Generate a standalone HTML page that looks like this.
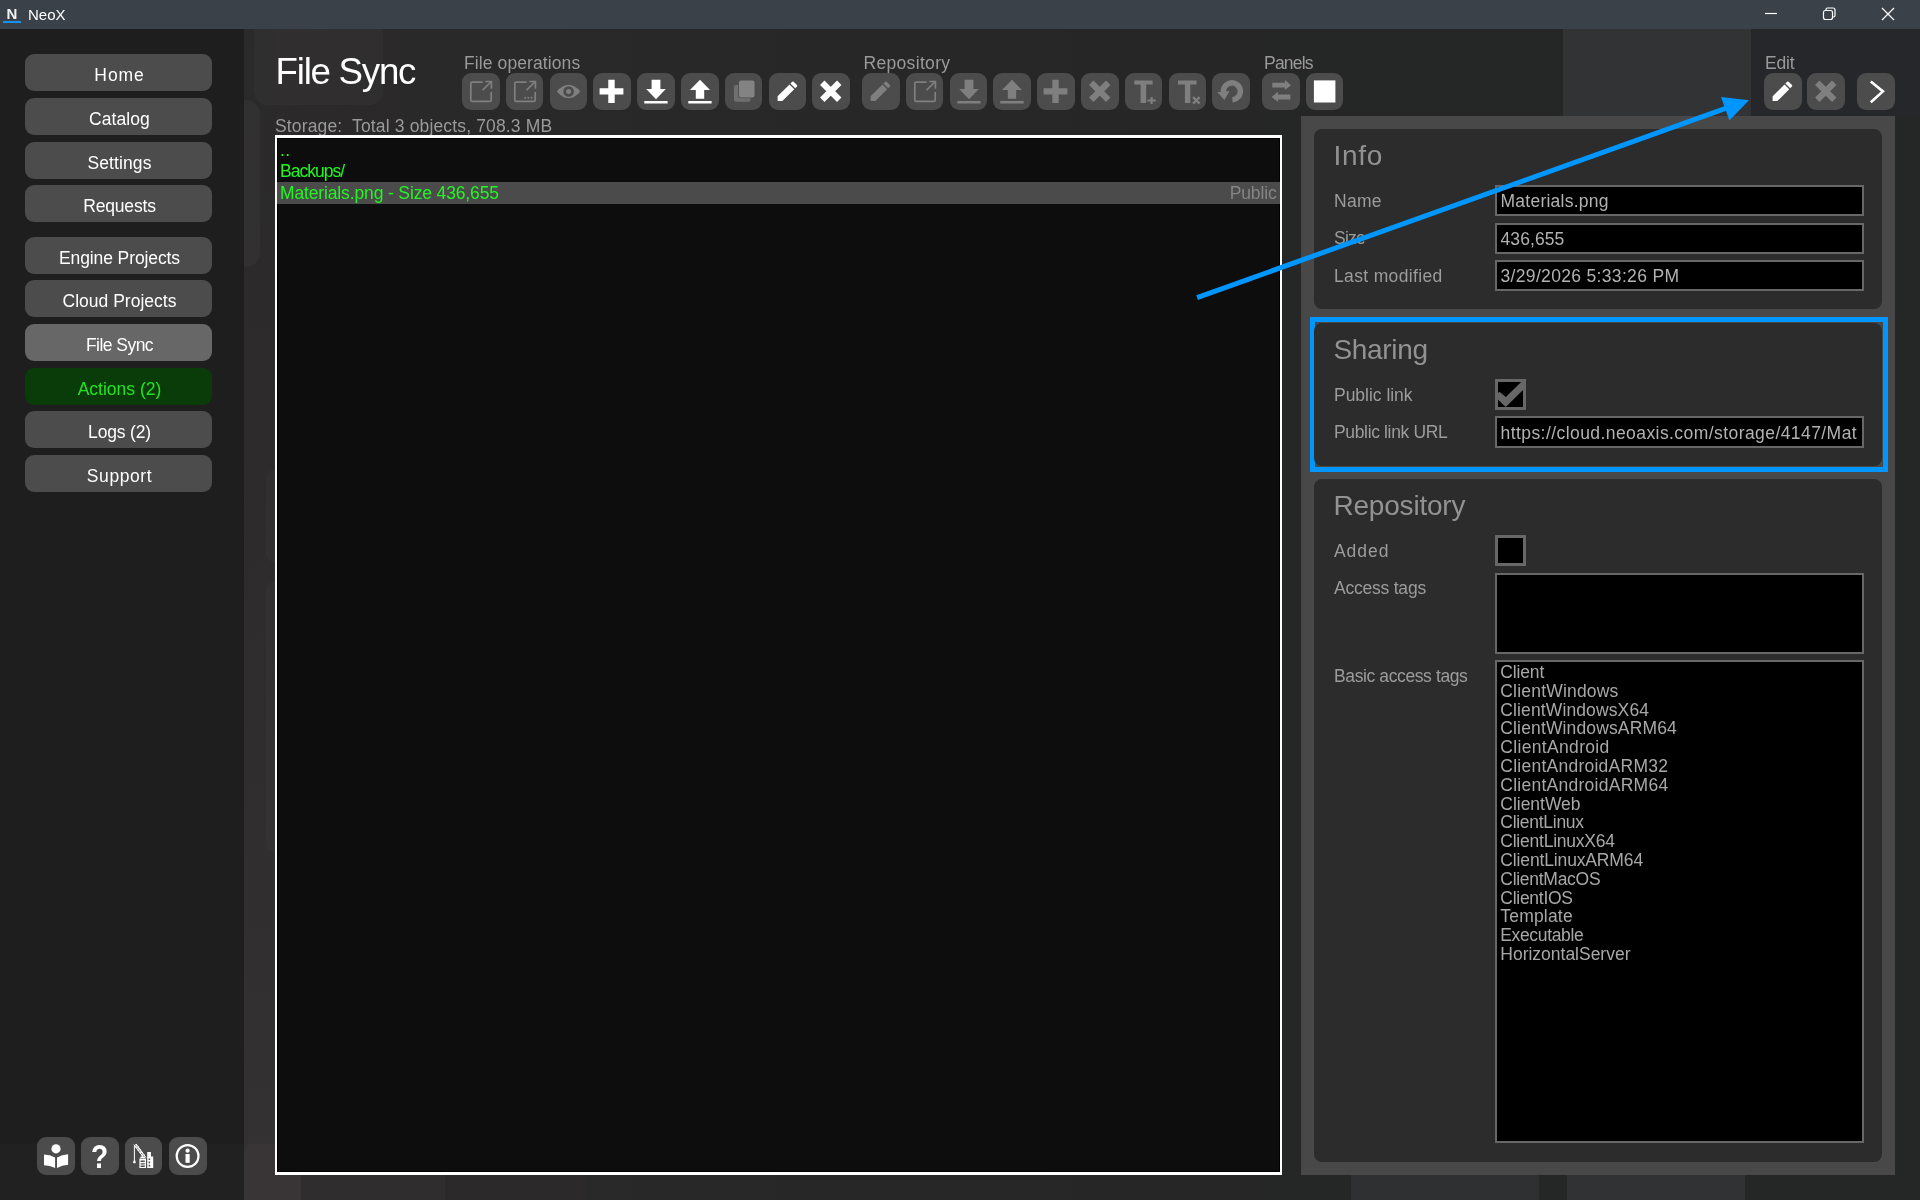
<!DOCTYPE html>
<html lang="en">
<head>
<meta charset="utf-8">
<title>NeoX</title>
<style>
*{box-sizing:border-box;margin:0;padding:0}
html,body{width:1920px;height:1200px;overflow:hidden;background:#272727;font-family:"Liberation Sans",sans-serif;}
body{position:relative;color:#fff}
.abs{position:absolute}
#wrap{position:absolute;left:0;top:0;width:1920px;height:1200px;will-change:transform}
/* title bar */
#titlebar{left:0;top:0;width:1920px;height:29px;background:#3a4149}
#titlebar .logo{left:6.5px;top:4.5px;font-size:15px;font-weight:bold;color:#f2f2f2;line-height:18px}
#titlebar .logoline{left:3px;top:21px;width:18px;height:2px;background:#1492ee}
#titlebar .ttl{left:28px;top:6px;font-size:15px;line-height:18px;color:#fff}
/* sidebar */
#sidebar{left:0;top:29px;width:244px;height:1171px;background:#1e1e1e}
.nav{position:absolute;left:25px;width:187px;height:37px;border-radius:9px;background:#4c4c4c;color:#fff;font-size:17.5px;letter-spacing:-.1px;line-height:37px;text-align:center;padding-top:3px;padding-left:2px}
.nav.sel{background:#676767}
.nav.act{background:#0a3c0a;color:#22e322}
/* main bg */
#mainbg{left:244px;top:29px;width:1676px;height:1171px;background:linear-gradient(90deg,#2c2a2b 0,#2a292a 200px,#262626 900px,#252626 100%)}
.bgr{position:absolute;border-radius:14px}
/* text */
.h1{left:275.6px;top:50px;font-size:36.7px;line-height:44px;color:#fff;white-space:nowrap}
.grp{position:absolute;top:53px;font-size:17.5px;letter-spacing:.25px;line-height:20px;color:#9a9a9a;white-space:nowrap}
.tb{position:absolute;top:73px;width:37.5px;height:37px;border-radius:9px;background:#4c4c4c}
.tb svg{position:absolute;left:0;top:0;width:38px;height:37px;overflow:visible}
.tb.dis svg{fill:#7f7f7f;stroke:#7f7f7f}
.tb.en svg{fill:#fff;stroke:#fff}
.storage{left:275px;top:116px;font-size:17.5px;letter-spacing:.3px;line-height:20px;color:#9a9a9a;white-space:pre}
/* list */
#list{left:275px;top:135px;width:1007px;height:1040px;border:solid #fff;border-width:3px 2px;background:#0d0d0d;box-shadow:inset 0 0 0 1px #000}
.row{position:absolute;left:0;width:1003px;height:22px;font-size:17.5px;letter-spacing:.3px;line-height:22px;color:#22f622;padding-left:3px;white-space:nowrap}
.row.sel{background:#4b4b4b}
.row .pub{position:absolute;right:3.5px;top:0;color:#858585;letter-spacing:-.15px}
/* right panel */
#rp{left:1301px;top:116px;width:594px;height:1059px;background:#484848}
.pn{position:absolute;left:1314px;width:568px;border-radius:8px;background:#2c2c2c}
.pt{position:absolute;left:1333.5px;font-size:28px;line-height:34px;color:#929292;white-space:nowrap}
.lb{position:absolute;left:1334px;font-size:17.5px;letter-spacing:.3px;line-height:20px;color:#9c9c9c;white-space:nowrap}
.fd{position:absolute;left:1495px;width:369px;height:31px;border:2px solid #676767;background:#000;color:#b2b2b2;font-size:17.5px;letter-spacing:.25px;line-height:29px;padding-left:3.5px;white-space:nowrap;overflow:hidden}
.cb{position:absolute;left:1495px;width:31px;height:31px;border:3px solid #676767;background:#000}
.tags{position:absolute;left:1500.3px;font-size:17.5px;line-height:18.8px;color:#a8a8a8;white-space:nowrap}
.tg{height:18.8px;letter-spacing:.2px}
.ib{position:absolute;top:1137px;width:37.5px;height:37.5px;border-radius:9px;background:#4c4c4c}
.ib svg{position:absolute;left:0;top:0;width:37px;height:37px;fill:#fff;stroke:#fff}
</style>
</head>
<body>
<div id="wrap">
<div id="mainbg" class="abs">
<div class="bgr" style="left:0;top:0;width:31px;height:1171px;border-radius:0;background:linear-gradient(180deg,#2b2a2b 0,#2d2b2c 40%,#322f30 80%,#353233 100%)"></div>
<div class="bgr" style="left:10px;top:-14px;width:129px;height:90px;background:rgba(255,255,255,.028)"></div>
<div class="bgr" style="left:-14px;top:71px;width:30px;height:167px;background:rgba(255,255,255,.03)"></div>
<div class="bgr" style="left:22px;top:441px;width:20px;height:92px;background:rgba(255,255,255,.02);border-radius:8px"></div>
<div class="bgr" style="left:22px;top:553px;width:20px;height:270px;background:rgba(255,255,255,.02);border-radius:8px"></div>
<div class="bgr" style="left:1319px;top:0;width:188px;height:87px;background:#323334;border-radius:0"></div>
<div class="bgr" style="left:1507px;top:0;width:169px;height:87px;background:#26272a;border-radius:0"></div>
<div class="bgr" style="left:0;top:1115px;width:57px;height:56px;background:#393536;border-radius:8px 8px 0 0"></div>
<div class="bgr" style="left:57px;top:1146px;width:144px;height:25px;background:#2f2d2e;border-radius:0"></div>
<div class="bgr" style="left:201px;top:1146px;width:140px;height:25px;background:#2b292a;border-radius:0"></div>
<div class="bgr" style="left:1107px;top:1146px;width:188px;height:25px;background:#2e3032;border-radius:0"></div>
<div class="bgr" style="left:1323px;top:1146px;width:178px;height:25px;background:#303234;border-radius:0"></div>
</div>
<div id="sidebar" class="abs"><div class="abs" style="left:0;top:1115px;width:244px;height:56px;background:rgba(255,255,255,.014)"></div></div>
<div id="titlebar" class="abs">
  <div class="abs logo">N</div><div class="abs logoline"></div>
  <div class="abs ttl">NeoX</div>
</div>
<div class="nav" style="top:54px;letter-spacing:0.90px">Home</div>
<div class="nav" style="top:98px;letter-spacing:0.07px">Catalog</div>
<div class="nav" style="top:141.5px;letter-spacing:0.11px">Settings</div>
<div class="nav" style="top:185px;letter-spacing:-0.17px">Requests</div>
<div class="nav" style="top:236.5px;letter-spacing:-0.10px">Engine Projects</div>
<div class="nav" style="top:280px;letter-spacing:0.01px">Cloud Projects</div>
<div class="nav sel" style="top:324px;letter-spacing:-0.54px">File Sync</div>
<div class="nav act" style="top:368px;letter-spacing:0.00px">Actions (2)</div>
<div class="nav" style="top:411px;letter-spacing:-0.17px">Logs (2)</div>
<div class="nav" style="top:455px;letter-spacing:0.57px">Support</div>

<div class="abs h1" style="letter-spacing:-1.26px">File Sync</div>
<div class="grp" style="left:464px;letter-spacing:0.10px">File operations</div>
<div class="grp" style="left:863.5px;letter-spacing:0.32px">Repository</div>
<div class="grp" style="left:1264px;letter-spacing:-0.79px">Panels</div>
<div class="grp" style="left:1765px;letter-spacing:-0.15px">Edit</div>
<div class="abs storage" style="letter-spacing:0.15px">Storage:  Total 3 objects, 708.3 MB</div>
<!--TB0-->
<div class="tb dis" style="left:462.00px"><svg viewBox="0 0 38 37"><path d="M20.6 9.2 H10.2 Q8.8 9.2 8.8 10.6 V27 Q8.8 28.4 10.2 28.4 H27.8 Q29.2 28.4 29.2 27 V19" fill="none" stroke-width="1.7"/><path d="M20.6 17.2 L28.8 9 M23.4 8.5 H29.4 V15.8" fill="none" stroke-width="1.7"/></svg></div>
<div class="tb dis" style="left:505.81px"><svg viewBox="0 0 38 37"><path d="M20.6 9.2 H10.2 Q8.8 9.2 8.8 10.6 V27 Q8.8 28.4 10.2 28.4 H27.8 Q29.2 28.4 29.2 27 V19" fill="none" stroke-width="1.7"/><path d="M20.6 17.2 L28.8 9 M23.4 8.5 H29.4 V15.8" fill="none" stroke-width="1.7"/><circle cx="19.2" cy="24.8" r="1.05" stroke="none"/><circle cx="22.4" cy="24.8" r="1.05" stroke="none"/><circle cx="25.6" cy="24.8" r="1.05" stroke="none"/></svg></div>
<div class="tb dis" style="left:549.62px"><svg viewBox="0 0 38 37"><path fill-rule="evenodd" stroke="none" d="M6.8 18.5 Q12.5 11.8 18.6 11.8 Q24.7 11.8 30.4 18.5 Q24.7 25.2 18.6 25.2 Q12.5 25.2 6.8 18.5 Z M18.6 13.2 A5.3 5.3 0 1 0 18.6 23.8 A5.3 5.3 0 1 0 18.6 13.2 Z"/><circle cx="18.6" cy="18.5" r="2.5" stroke="none"/></svg></div>
<div class="tb en" style="left:593.43px"><svg viewBox="0 0 38 37"><path stroke="none" d="M15.3 6.8 H21.7 V15.2 H30.4 V21.4 H21.7 V29.9 H15.3 V21.4 H6.6 V15.2 H15.3 Z"/></svg></div>
<div class="tb en" style="left:637.24px"><svg viewBox="0 0 38 37"><path stroke="none" d="M14.6 6.8 H23.4 V16 H28.8 L19 26.2 L9.2 16 H14.6 Z M7.3 28 H30.6 V30.4 H7.3 Z"/></svg></div>
<div class="tb en" style="left:681.05px"><svg viewBox="0 0 38 37"><path stroke="none" d="M19 6.8 L29 17 H23.2 V25.7 H14.8 V17 H9 Z M7.3 28 H30.6 V30.4 H7.3 Z"/></svg></div>
<div class="tb dis" style="left:724.86px"><svg viewBox="0 0 38 37"><rect x="9" y="12" width="16.5" height="16.8" rx="2" stroke="none" fill="#6f6f6f"/><rect x="13" y="6.6" width="17.2" height="18.6" rx="2.4" stroke="none" fill="#4c4c4c"/><rect x="13.9" y="7.4" width="15.6" height="17" rx="2" stroke="none" fill="#838383"/></svg></div>
<div class="tb en" style="left:768.67px"><svg viewBox="0 0 38 37"><g transform="translate(8.6 28.1) rotate(-45)" stroke="none"><path d="M0 0 L3.35 -3.35 H20.2 V3.35 H3.35 Z"/><path d="M21.5 -3.35 H24 Q25 -3.35 25 -2.35 V2.35 Q25 3.35 24 3.35 H21.5 Z"/></g></svg></div>
<div class="tb en" style="left:812.48px"><svg viewBox="0 0 38 37"><g transform="translate(18.75 18.3) rotate(45)" stroke="none"><rect x="-12" y="-3.1" width="24" height="6.2"/><rect x="-3.1" y="-12" width="6.2" height="24"/></g></svg></div>
<div class="tb dis" style="left:862.00px"><svg viewBox="0 0 38 37"><g transform="translate(8.6 28.1) rotate(-45)" stroke="none"><path d="M0 0 L3.35 -3.35 H20.2 V3.35 H3.35 Z"/><path d="M21.5 -3.35 H24 Q25 -3.35 25 -2.35 V2.35 Q25 3.35 24 3.35 H21.5 Z"/></g></svg></div>
<div class="tb dis" style="left:905.81px"><svg viewBox="0 0 38 37"><path d="M20.6 9.2 H10.2 Q8.8 9.2 8.8 10.6 V27 Q8.8 28.4 10.2 28.4 H27.8 Q29.2 28.4 29.2 27 V19" fill="none" stroke-width="1.7"/><path d="M20.6 17.2 L28.8 9 M23.4 8.5 H29.4 V15.8" fill="none" stroke-width="1.7"/></svg></div>
<div class="tb dis" style="left:949.62px"><svg viewBox="0 0 38 37"><path stroke="none" d="M14.6 6.8 H23.4 V16 H28.8 L19 26.2 L9.2 16 H14.6 Z M7.3 28 H30.6 V30.4 H7.3 Z"/></svg></div>
<div class="tb dis" style="left:993.43px"><svg viewBox="0 0 38 37"><path stroke="none" d="M19 6.8 L29 17 H23.2 V25.7 H14.8 V17 H9 Z M7.3 28 H30.6 V30.4 H7.3 Z"/></svg></div>
<div class="tb dis" style="left:1037.24px"><svg viewBox="0 0 38 37"><path stroke="none" d="M15.3 6.8 H21.7 V15.2 H30.4 V21.4 H21.7 V29.9 H15.3 V21.4 H6.6 V15.2 H15.3 Z"/></svg></div>
<div class="tb dis" style="left:1081.05px"><svg viewBox="0 0 38 37"><g transform="translate(18.75 18.3) rotate(45)" stroke="none"><rect x="-12" y="-3.1" width="24" height="6.2"/><rect x="-3.1" y="-12" width="6.2" height="24"/></g></svg></div>
<div class="tb dis" style="left:1124.86px"><svg viewBox="0 0 38 37"><path stroke="none" d="M9.3 7.4 H27.6 V11.6 H21.2 V30.1 H15.6 V11.6 H9.3 Z"/><path stroke="none" d="M25.5 23.9 H27.7 V26.4 H30.8 V28.6 H27.7 V31.1 H25.5 V28.6 H22.4 V26.4 H25.5 Z"/></svg></div>
<div class="tb dis" style="left:1168.67px"><svg viewBox="0 0 38 37"><path stroke="none" d="M9 7.4 H27.5 V11.6 H21.3 V30.1 H15.9 V11.6 H9 Z"/><g transform="translate(27.3 27.4) rotate(45)" stroke="none"><rect x="-4.6" y="-1.15" width="9.2" height="2.3"/><rect x="-1.15" y="-4.6" width="2.3" height="9.2"/></g></svg></div>
<div class="tb dis" style="left:1212.48px"><svg viewBox="0 0 38 37"><path fill="none" stroke-width="5.5" d="M11.55 19.6 A8.45 8.45 0 1 1 20.4 26.75"/><path stroke="none" d="M5.4 19.2 L17.6 18 L12.4 27 Z"/></svg></div>
<div class="tb dis" style="left:1262.00px"><svg viewBox="0 0 38 37"><path stroke="none" d="M10.3 9.8 H22.9 V7.1 L29.1 12.2 L22.9 17 V14.6 H10.3 Z"/><path stroke="none" d="M28.3 21.5 H16 V18.75 L9.7 23.9 L16 28.9 V26.5 H28.3 Z"/></svg></div>
<div class="tb en" style="left:1305.81px"><svg viewBox="0 0 38 37"><rect x="7.9" y="7.4" width="21.5" height="22.1" stroke="none" fill="#fff"/></svg></div>
<div class="tb en" style="left:1764.00px"><svg viewBox="0 0 38 37"><g transform="translate(8.6 28.1) rotate(-45)" stroke="none"><path d="M0 0 L3.35 -3.35 H20.2 V3.35 H3.35 Z"/><path d="M21.5 -3.35 H24 Q25 -3.35 25 -2.35 V2.35 Q25 3.35 24 3.35 H21.5 Z"/></g></svg></div>
<div class="tb dis" style="left:1807.20px"><svg viewBox="0 0 38 37"><g transform="translate(18.75 18.3) rotate(45)" stroke="none"><rect x="-12" y="-3.1" width="24" height="6.2"/><rect x="-3.1" y="-12" width="6.2" height="24"/></g></svg></div>
<div class="tb en" style="left:1857.20px"><svg viewBox="0 0 38 37"><path fill="none" stroke-width="2.6" d="M13.8 8.6 L25.9 18.4 L13.8 29.2"/></svg></div>
<!--TB1-->
<div class="ib" style="left:37px"><svg viewBox="0 0 37 37"><circle cx="19" cy="11.8" r="4.6" stroke="none"/><path stroke="none" d="M7 17.6 Q13 17.6 18.1 20.6 V31 Q13 28.4 7 28.2 Z M31.1 17.2 Q25 17.4 20 20.6 V31 Q25 28 31.1 27.7 Z"/></svg></div>
<div class="ib" style="left:81px"><svg viewBox="0 0 37 37"><text transform="translate(18.7 31) scale(.84 1)" x="0" y="0" text-anchor="middle" font-family="Liberation Sans, sans-serif" font-weight="bold" font-size="33.5" stroke="none">?</text></svg></div>
<div class="ib" style="left:124.7px"><svg viewBox="0 0 37 37"><path fill="none" stroke-width="1" d="M9.4 8.2 V24 M8.8 7.6 L19 21 M11.2 7 L21 20.6 M9.2 8.6 L11.4 7.4 M11 11 L13.4 9.6 M13 13.6 L15.4 12.4 M15 16.2 L17.4 15 M17 18.8 L19.4 17.6 M11 11 L11.4 7.4 M13 13.6 L13.4 9.6 M15 16.2 L15.4 12.4 M17 18.8 L17.4 15"/><rect x="8.2" y="23.8" width="2.4" height="2.4" stroke="none"/><path stroke="none" fill-rule="evenodd" d="M14.4 21.4 H21 V31 H14.4 Z M15.6 23.6 H19.8 V25 H15.6 Z M15.6 26.2 H19.8 V27.6 H15.6 Z M15.6 28.6 H19.8 V30 H15.6 Z M15.4 19.6 H20 V21 H15.4 Z"/><path stroke="none" fill-rule="evenodd" d="M22.2 15.1 H26 V19.5 H28.2 V31 H22.2 Z M23.6 21.4 H25.2 V23 H23.6 Z M23.6 24.6 H25.2 V26.2 H23.6 Z M23.6 27.8 H25.2 V29.4 H23.6 Z"/></svg></div>
<div class="ib" style="left:169px"><svg viewBox="0 0 37 37"><circle cx="18.6" cy="19" r="10.9" fill="none" stroke-width="2.2"/><circle cx="18.6" cy="13.7" r="2.1" stroke="none"/><rect x="16.5" y="17" width="4.2" height="8.8" stroke="none"/></svg></div>


<div id="list" class="abs">
  <div class="row" style="top:1px">..</div>
  <div class="row" style="top:22px;letter-spacing:-0.98px">Backups/</div>
  <div class="row sel" style="top:44px;letter-spacing:-0.14px">Materials.png - Size 436,655<span class="pub">Public</span></div>
</div>

<div id="rp" class="abs"></div>
<div class="pn" style="top:129px;height:180px"></div>
<div class="pt" style="top:139px;letter-spacing:0.74px">Info</div>
<div class="lb" style="top:191px;letter-spacing:0.30px">Name</div>
<div class="fd" style="top:185px;letter-spacing:0.25px">Materials.png</div>
<div class="lb" style="top:228px;letter-spacing:-0.77px">Size</div>
<div class="fd" style="top:223px;letter-spacing:0.08px">436,655</div>
<div class="lb" style="top:266px;letter-spacing:0.35px">Last modified</div>
<div class="fd" style="top:260px;letter-spacing:0.33px">3/29/2026 5:33:26 PM</div>

<div class="abs" style="left:1310px;top:317px;width:578px;height:155px;border:5px solid #0096ff"></div>
<div class="pn" style="top:323px;height:143px"></div>
<div class="pt" style="top:333px;letter-spacing:-0.34px">Sharing</div>
<div class="lb" style="top:385px;letter-spacing:-0.02px">Public link</div>
<div class="cb" style="top:379px"><svg width="31" height="31" viewBox="0 0 31 31" style="position:absolute;left:-3px;top:-3px"><path d="M3 13.7 L4.8 12.9 L10.8 18.1 L26.2 3 L28 3 L28 11 L10.8 28 L3 20.8 Z" fill="#676767"/></svg></div>
<div class="lb" style="top:422px;letter-spacing:-0.35px">Public link URL</div>
<div class="fd" style="top:416px;height:32px;line-height:30px;letter-spacing:0.43px">https://cloud.neoaxis.com/storage/4147/Mat</div>

<div class="pn" style="top:479px;height:683px"></div>
<div class="pt" style="top:489px;letter-spacing:-0.21px">Repository</div>
<div class="lb" style="top:541px;letter-spacing:0.95px">Added</div>
<div class="cb" style="top:535px"></div>
<div class="lb" style="top:578px;letter-spacing:-0.22px">Access tags</div>
<div class="fd" style="top:573px;height:81px"></div>
<div class="lb" style="top:666px;letter-spacing:-0.39px">Basic access tags</div>
<div class="fd" style="top:660px;height:483px"></div>
<div class="tags" style="top:663px"><div class="tg" style="letter-spacing:-0.16px">Client</div><div class="tg" style="letter-spacing:0.19px">ClientWindows</div><div class="tg" style="letter-spacing:0.12px">ClientWindowsX64</div><div class="tg" style="letter-spacing:0.14px">ClientWindowsARM64</div><div class="tg" style="letter-spacing:0.33px">ClientAndroid</div><div class="tg" style="letter-spacing:0.25px">ClientAndroidARM32</div><div class="tg" style="letter-spacing:0.26px">ClientAndroidARM64</div><div class="tg" style="letter-spacing:-0.02px">ClientWeb</div><div class="tg" style="letter-spacing:-0.28px">ClientLinux</div><div class="tg" style="letter-spacing:-0.23px">ClientLinuxX64</div><div class="tg" style="letter-spacing:-0.14px">ClientLinuxARM64</div><div class="tg" style="letter-spacing:-0.28px">ClientMacOS</div><div class="tg" style="letter-spacing:-0.27px">ClientIOS</div><div class="tg" style="letter-spacing:0.19px">Template</div><div class="tg" style="letter-spacing:-0.36px">Executable</div><div class="tg" style="letter-spacing:-0.01px">HorizontalServer</div></div>

<svg class="abs" style="left:0;top:0" width="1920" height="1200" viewBox="0 0 1920 1200">
  <line x1="1197.1" y1="297.6" x2="1727" y2="107.9" stroke="#0096ff" stroke-width="5"/>
  <polygon points="1749,100.3 1721,97.1 1729.4,120.4" fill="#0096ff"/>
</svg>
<svg class="abs" style="left:1740px;top:0" width="180" height="29" viewBox="0 0 180 29" fill="none" stroke="#fff" stroke-width="1.2">
  <line x1="25" y1="13.5" x2="37" y2="13.5"/>
  <rect x="83.5" y="10.5" width="9" height="9" rx="2"/>
  <path d="M86 10.5 V9.5 Q86 8 87.5 8 H93 Q95 8 95 10 V15.5 Q95 17 93.5 17 H92.5"/>
  <path d="M142 8 L154 20 M154 8 L142 20"/>
</svg>

</div>
</body>
</html>
